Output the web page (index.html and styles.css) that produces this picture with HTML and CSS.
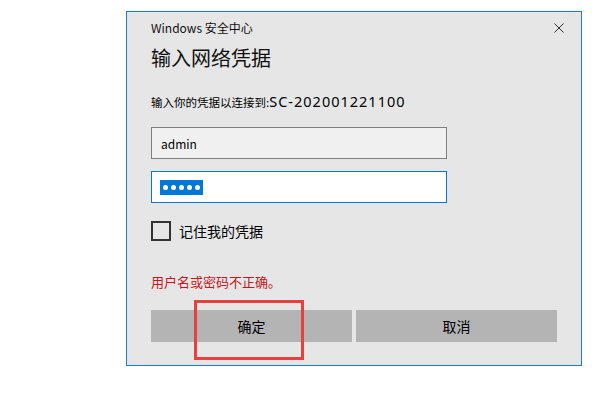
FILE: index.html
```html
<!DOCTYPE html>
<html lang="zh-CN">
<head>
  <meta charset="UTF-8">
  <title>Windows 安全中心</title>
  <link rel="stylesheet" href="styles.css">
</head>
<body>

<div class="dialog">
  <div class="header">
    <span class="app-name">Windows 安全中心</span>
    <svg class="close" width="10" height="10" viewBox="0 0 10 10">
      <path d="M0.5 0.5 L9.5 9.5 M9.5 0.5 L0.5 9.5" stroke="#333" stroke-width="1" fill="none"/>
    </svg>
  </div>

  <div class="content">
    <h1>输入网络凭据</h1>
    <div class="prompt">输入你的凭据以连接到:<span class="host">SC-202001221100</span></div>

    <div class="field user">admin</div>
    <div class="field password">
      <span class="selected">
        <i></i><i></i><i></i><i></i><i></i>
      </span>
    </div>

    <label class="remember">
      <span class="checkbox"></span>
      记住我的凭据
    </label>

    <div class="error">用户名或密码不正确。</div>

    <div class="actions">
      <button>确定</button>
      <button>取消</button>
      <div class="mark"></div>
    </div>
  </div>
</div>

</body>
</html>
```

FILE: styles.css
```css
html, body {
  margin: 0;
  padding: 0;
  background: #ffffff;
  font-family: "Noto Sans CJK SC", "Noto Sans", sans-serif;
  font-size: 12px;
  color: #000;
}

.dialog {
  box-sizing: border-box;
  width: 456px;
  height: 355px;
  margin: 11px 0 0 126px;
  border: 1px solid #1a7bd0;
  background: #e6e6e6;
}

.header {
  display: flex;
  justify-content: space-between;
  align-items: center;
  height: 16px;
  padding: 8px 17px 0 24px;
}

.app-name {
  line-height: 16px;
  color: #111;
}

.close {
  display: block;
}

.content {
  padding: 0 24px;
}

h1 {
  margin: 8px 0 0;
  font-size: 20px;
  font-weight: normal;
  line-height: 28px;
  color: #111;
}

.prompt {
  margin-top: 21px;
  height: 16px;
  line-height: 16px;
  font-size: 11.5px;
  white-space: nowrap;
}

.host {
  font-family: "Noto Sans", sans-serif;
  font-size: 14.5px;
  letter-spacing: 1px;
}

.field {
  box-sizing: border-box;
  width: 296px;
  height: 32px;
  display: flex;
  align-items: center;
  padding-left: 9px;
}

.user {
  margin-top: 18px;
  background: #f0f0f0;
  border: 1px solid #7f7f7f;
}

.password {
  margin-top: 12px;
  background: #fff;
  border: 1px solid #0078d7;
  padding-left: 8px;
}

.selected {
  display: flex;
  align-items: center;
  gap: 3px;
  height: 15px;
  padding: 0 3px;
  background: #0078d7;
}

.selected i {
  width: 5px;
  height: 5px;
  border-radius: 50%;
  background: #fff;
}

.remember {
  display: flex;
  align-items: center;
  gap: 8px;
  margin-top: 18px;
  height: 20px;
  font-size: 14px;
}

.checkbox {
  box-sizing: border-box;
  width: 20px;
  height: 20px;
  border: 2px solid #333;
}

.error {
  margin-top: 33px;
  line-height: 16px;
  font-size: 13px;
  color: #c4161c;
}

.actions {
  position: relative;
  display: flex;
  gap: 4px;
  margin-top: 20px;
}

.actions button {
  flex: 1;
  height: 32px;
  border: none;
  background: #b4b4b4;
  font-family: inherit;
  font-size: 14px;
  color: #000;
}

.mark {
  position: absolute;
  left: 43px;
  top: -10px;
  width: 110px;
  height: 60px;
  box-sizing: border-box;
  border: 3px solid #e8403f;
}
```
